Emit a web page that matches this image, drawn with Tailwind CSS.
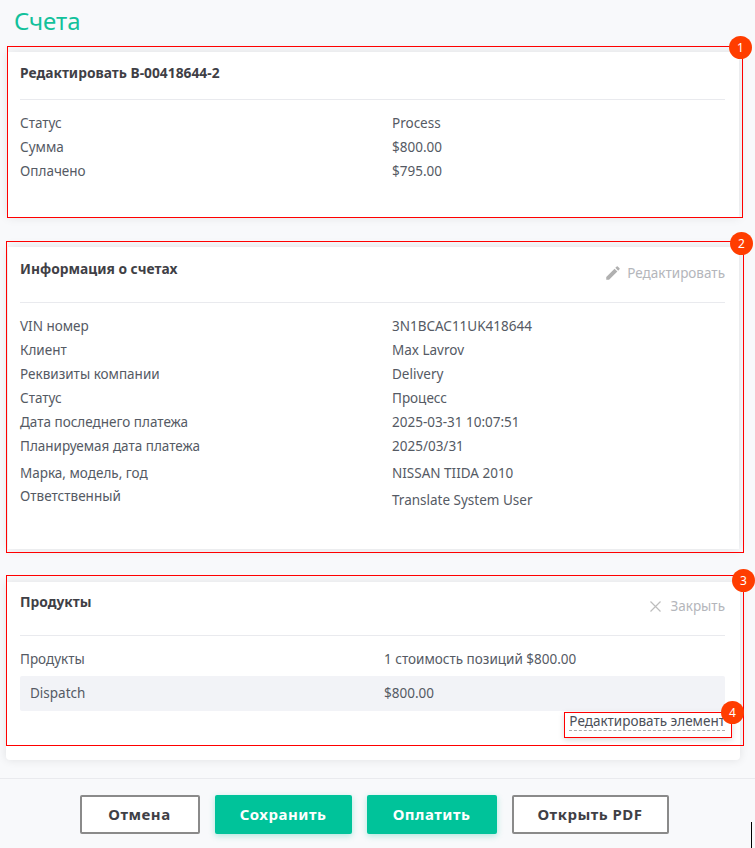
<!DOCTYPE html>
<html lang="ru">
<head>
    <meta charset="UTF-8">
    <title>Счета</title>
    <script src="https://cdn.jsdelivr.net/npm/@tailwindcss/browser@4"></script>
</head>
<body class="bg-[#f8f9fb] font-['Noto_Sans',sans-serif] text-[13.5px] text-[#555a64] w-[755px] h-[848px] overflow-hidden relative">

    <h1 class="text-[24px] leading-[30px] text-[#13c19b] pl-[14px] pt-[6px] h-[52px] font-normal">Счета</h1>

    <!-- 1 -->
    <section class="relative ml-[8px] w-[731px] h-[165px] bg-white shadow-[0_0_10px_rgba(0,0,0,0.1)] pl-[12px] pr-[14px]">
        <div class="absolute left-[-1px] top-[-6px] w-[736px] h-[172px] border border-[#f00] pointer-events-none"></div>
        <span class="absolute left-[721px] top-[-16px] w-[23px] h-[23px] rounded-full bg-[#ff3d00] text-white text-[12px] flex items-center justify-center">1</span>
        <div class="h-[48px] pt-[12px] border-b border-[#e9eaee] font-bold text-[13.8px] text-[#3f3f46] leading-[18px]">Редактировать B-00418644-2</div>
        <div class="grid grid-cols-[372px_1fr] pt-[11px] leading-[24px]">
            <div>Статус</div><div>Process</div>
            <div>Сумма</div><div>$800.00</div>
            <div>Оплачено</div><div>$795.00</div>
        </div>
    </section>

    <!-- 2 -->
    <section class="relative ml-[8px] mt-[30px] w-[731px] h-[302px] bg-white shadow-[0_0_10px_rgba(0,0,0,0.1)] pl-[12px] pr-[14px]">
        <div class="absolute left-[-2px] top-[-6px] w-[738px] h-[312px] border border-[#f00] pointer-events-none"></div>
        <span class="absolute left-[722px] top-[-15px] w-[23px] h-[23px] rounded-full bg-[#ff3d00] text-white text-[12px] flex items-center justify-center">2</span>
        <div class="h-[56px] pt-[13px] border-b border-[#e9eaee] flex justify-between">
            <span class="font-bold text-[13.8px] text-[#3f3f46] leading-[18px]">Информация о счетах</span>
            <span class="flex items-center gap-[5px] h-[24px] mt-[1px] text-[#b4b6bb]">
                <svg class="w-[18px] h-[18px]" viewBox="0 0 24 24" fill="#b0b0b0"><path d="M3 17.25V21h3.75L17.81 9.94l-3.75-3.75L3 17.25zM20.71 7.04a1 1 0 0 0 0-1.41l-2.34-2.34a1 1 0 0 0-1.41 0l-1.83 1.83 3.75 3.75 1.83-1.83z"/></svg>
                Редактировать
            </span>
        </div>
        <div class="grid grid-cols-[372px_1fr] pt-[11px] leading-[24px]">
            <div>VIN номер</div><div>3N1BCAC11UK418644</div>
            <div>Клиент</div><div>Max Lavrov</div>
            <div>Реквизиты компании</div><div>Delivery</div>
            <div>Статус</div><div>Процесс</div>
            <div>Дата последнего платежа</div><div>2025-03-31 10:07:51</div>
            <div>Планируемая дата платежа</div><div>2025/03/31</div>
            <div class="pt-[3px]">Марка, модель, год</div><div class="pt-[3px]">NISSAN TIIDA 2010</div>
            <div class="-mt-[1px]">Ответственный</div><div class="pt-[3px]">Translate System User</div>
        </div>
    </section>

    <!-- 3 -->
    <section class="relative ml-[6px] mt-[33px] w-[734px] h-[178px] bg-white rounded-b-[4px] shadow-[0_0_10px_rgba(0,0,0,0.1)] pl-[14px] pr-[15px]">
        <div class="absolute left-0 top-[-7px] w-[738px] h-[171px] border border-[#f00] pointer-events-none"></div>
        <span class="absolute left-[726px] top-[-13px] w-[23px] h-[23px] rounded-full bg-[#ff3d00] text-white text-[12px] flex items-center justify-center">3</span>
        <div class="h-[54px] pt-[11px] border-b border-[#e9eaee] flex justify-between">
            <span class="font-bold text-[13.8px] text-[#3f3f46] leading-[18px]">Продукты</span>
            <span class="flex items-center gap-[8px] h-[24px] mt-[1px] text-[#b4b6bb]">
                <svg class="w-[13px] h-[13px]" viewBox="0 0 13 13" fill="none" stroke="#bdbdbd" stroke-width="1.2"><path d="M1.5 1.5l10 10M11.5 1.5l-10 10"/></svg>
                Закрыть
            </span>
        </div>
        <div class="grid grid-cols-[364px_1fr] pt-[11px] leading-[24px]">
            <div>Продукты</div><div>1 стоимость позиций $800.00</div>
        </div>
        <div class="grid grid-cols-[354px_1fr] mt-[5px] h-[35px] items-center bg-[#f2f3f7] rounded-[2px] pl-[10px]">
            <div>Dispatch</div><div>$800.00</div>
        </div>
        <div class="relative flex justify-end mt-[1px]">
            <span class="border-b border-dashed border-[#aaa] leading-[18px] h-[19px] text-[#4b4f58]">Редактировать элемент</span>
            <div class="absolute right-[-7px] top-0 w-[168px] h-[26px] border border-[#f00] shadow-[0_2px_6px_rgba(0,0,0,0.15)] pointer-events-none"></div>
            <span class="absolute right-[-19px] top-[-11px] w-[23px] h-[23px] rounded-full bg-[#ff3d00] text-white text-[12px] flex items-center justify-center">4</span>
        </div>
    </section>

    <!-- footer -->
    <footer class="mt-[18px] border-t border-[#e9eaee] pt-[16px] flex justify-center gap-[15px] pr-[7px]">
        <button class="w-[120px] h-[39px] bg-white border-2 border-[#8a8a8a] rounded-[2px] font-bold text-[15px] text-[#3f3f46] tracking-[0.5px]">Отмена</button>
        <button class="w-[137px] h-[39px] bg-[#00c39a] rounded-[2px] font-bold text-[15px] text-white tracking-[0.5px] shadow-[0_2px_6px_rgba(0,195,154,0.3)]">Сохранить</button>
        <button class="w-[130px] h-[39px] bg-[#00c39a] rounded-[2px] font-bold text-[15px] text-white tracking-[0.5px] shadow-[0_2px_6px_rgba(0,195,154,0.3)]">Оплатить</button>
        <button class="w-[157px] h-[39px] bg-white border-2 border-[#8a8a8a] rounded-[2px] font-bold text-[15px] text-[#3f3f46] tracking-[0.5px]">Открыть PDF</button>
    </footer>

    <div class="absolute left-[751px] top-[822px] w-[1px] h-[26px] bg-black"></div>
</body>
</html>
